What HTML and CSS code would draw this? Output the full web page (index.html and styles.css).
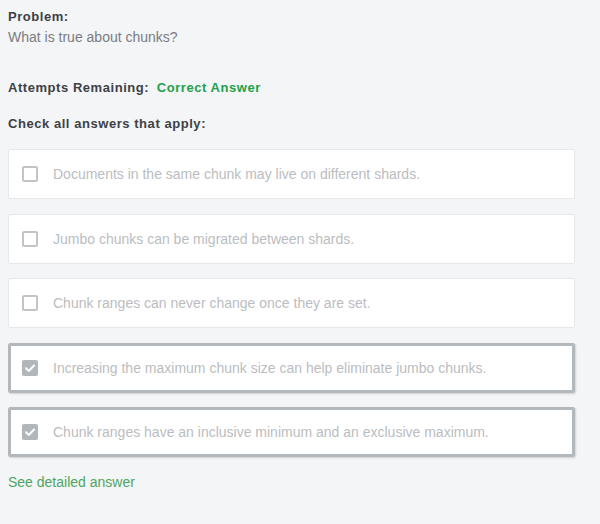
FILE: index.html
```html
<!DOCTYPE html>
<html>
<head>
<meta charset="utf-8">
<link rel="stylesheet" href="styles.css">
</head>
<body>
<div class="problem">
  <div class="label">Problem:</div>
  <div class="question">What is true about chunks?</div>
  <div class="attempts"><span class="label">Attempts Remaining:</span> <span class="correct">Correct Answer</span></div>
  <div class="label instructions">Check all answers that apply:</div>
  <div class="options">
    <div class="option"><span class="box"></span><span class="text">Documents in the same chunk may live on different shards.</span></div>
    <div class="option"><span class="box"></span><span class="text">Jumbo chunks can be migrated between shards.</span></div>
    <div class="option"><span class="box"></span><span class="text">Chunk ranges can never change once they are set.</span></div>
    <div class="option checked"><span class="box"><svg viewBox="0 0 16 16" width="16" height="16"><path d="M4 8.3 L6.8 11 L12.2 5.4" fill="none" stroke="#fff" stroke-width="2" stroke-linecap="round" stroke-linejoin="round"/></svg></span><span class="text">Increasing the maximum chunk size can help eliminate jumbo chunks.</span></div>
    <div class="option checked"><span class="box"><svg viewBox="0 0 16 16" width="16" height="16"><path d="M4 8.3 L6.8 11 L12.2 5.4" fill="none" stroke="#fff" stroke-width="2" stroke-linecap="round" stroke-linejoin="round"/></svg></span><span class="text">Chunk ranges have an inclusive minimum and an exclusive maximum.</span></div>
  </div>
  <div class="detail">See detailed answer</div>
</div>
</body>
</html>
```
FILE: styles.css
```css
html, body {
  margin: 0;
  background: #f4f5f7;
}
body {
  padding: 8px 25px 0 8px;
  font-family: "Liberation Sans", Arial, sans-serif;
  font-size: 14px;
  line-height: 18px;
  color: #3d4045;
}
.label {
  font-size: 13px;
  font-weight: bold;
  letter-spacing: 0.55px;
  color: #3d4045;
}
.question {
  margin-top: 2px;
  color: #7a7d81;
}
.attempts {
  margin-top: 33px;
  font-size: 13px;
}
.correct {
  font-weight: bold;
  color: #22a14a;
  letter-spacing: 0.55px;
  margin-left: 4px;
}
.instructions {
  margin-top: 18px;
}
.options {
  margin-top: 16px;
  display: flex;
  flex-direction: column;
  gap: 14.5px;
}
.option {
  box-sizing: border-box;
  height: 50px;
  background: #fff;
  border: 1px solid #e6e8ea;
  border-radius: 2px;
  display: flex;
  align-items: center;
  padding-left: 13px;
  gap: 15px;
}
.option.checked {
  border-color: #b3b8bc;
  box-shadow: inset 0 0 0 2px #b3b8bc, 1px 1px 2px rgba(0,0,0,0.15);
}
.box {
  box-sizing: border-box;
  width: 16px;
  height: 16px;
  border: 2px solid #c2c4c6;
  border-radius: 2px;
  flex: none;
  display: flex;
}
.checked .box {
  border: none;
  background: #b1b6bb;
}
.text {
  color: #bbbdbf;
}
.detail {
  margin-top: 16px;
  color: #4ea562;
}
```
